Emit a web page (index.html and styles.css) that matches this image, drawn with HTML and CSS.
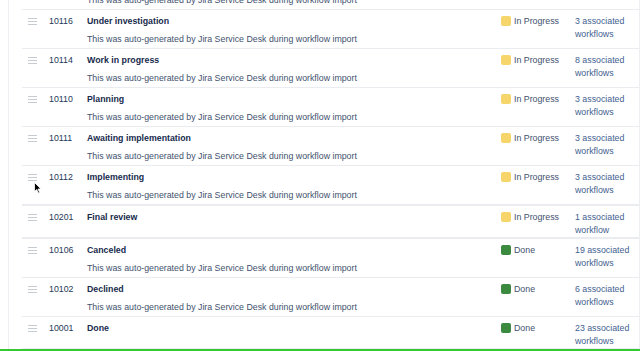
FILE: index.html
```html
<!DOCTYPE html>
<html>
<head>
<meta charset="utf-8">
<link rel="stylesheet" href="styles.css">
</head>
<body>
<div class="frame">
  <div class="list">
    <div class="row">
      <span class="handle"><svg width="9" height="7" viewBox="0 0 9 7"><path d="M0 .5h9M0 3.5h9M0 6.5h9" stroke="#c7cbd2" stroke-width="1"/></svg></span>
      <span class="id">10115</span>
      <span class="name">Waiting for approval</span>
      <span class="desc">This was auto-generated by Jira Service Desk during workflow import</span>
      <span class="status"><i class="sq prog"></i>In Progress</span>
      <a class="link">2 associated workflows</a>
    </div>
    <div class="row">
      <span class="handle"><svg width="9" height="7" viewBox="0 0 9 7"><path d="M0 .5h9M0 3.5h9M0 6.5h9" stroke="#c7cbd2" stroke-width="1"/></svg></span>
      <span class="id">10116</span>
      <span class="name">Under investigation</span>
      <span class="desc">This was auto-generated by Jira Service Desk during workflow import</span>
      <span class="status"><i class="sq prog"></i>In Progress</span>
      <a class="link">3 associated workflows</a>
    </div>
    <div class="row">
      <span class="handle"><svg width="9" height="7" viewBox="0 0 9 7"><path d="M0 .5h9M0 3.5h9M0 6.5h9" stroke="#c7cbd2" stroke-width="1"/></svg></span>
      <span class="id">10114</span>
      <span class="name">Work in progress</span>
      <span class="desc">This was auto-generated by Jira Service Desk during workflow import</span>
      <span class="status"><i class="sq prog"></i>In Progress</span>
      <a class="link">8 associated workflows</a>
    </div>
    <div class="row">
      <span class="handle"><svg width="9" height="7" viewBox="0 0 9 7"><path d="M0 .5h9M0 3.5h9M0 6.5h9" stroke="#c7cbd2" stroke-width="1"/></svg></span>
      <span class="id">10110</span>
      <span class="name">Planning</span>
      <span class="desc">This was auto-generated by Jira Service Desk during workflow import</span>
      <span class="status"><i class="sq prog"></i>In Progress</span>
      <a class="link">3 associated workflows</a>
    </div>
    <div class="row">
      <span class="handle"><svg width="9" height="7" viewBox="0 0 9 7"><path d="M0 .5h9M0 3.5h9M0 6.5h9" stroke="#c7cbd2" stroke-width="1"/></svg></span>
      <span class="id">10111</span>
      <span class="name">Awaiting implementation</span>
      <span class="desc">This was auto-generated by Jira Service Desk during workflow import</span>
      <span class="status"><i class="sq prog"></i>In Progress</span>
      <a class="link">3 associated workflows</a>
    </div>
    <div class="row thick">
      <span class="handle"><svg width="9" height="7" viewBox="0 0 9 7"><path d="M0 .5h9M0 3.5h9M0 6.5h9" stroke="#c7cbd2" stroke-width="1"/></svg></span>
      <span class="id">10112</span>
      <span class="name">Implementing</span>
      <span class="desc">This was auto-generated by Jira Service Desk during workflow import</span>
      <span class="status"><i class="sq prog"></i>In Progress</span>
      <a class="link">3 associated workflows</a>
    </div>
    <div class="row thick">
      <span class="handle"><svg width="9" height="7" viewBox="0 0 9 7"><path d="M0 .5h9M0 3.5h9M0 6.5h9" stroke="#c7cbd2" stroke-width="1"/></svg></span>
      <span class="id">10201</span>
      <span class="name">Final review</span>
      <span class="status"><i class="sq prog"></i>In Progress</span>
      <a class="link">1 associated workflow</a>
    </div>
    <div class="row">
      <span class="handle"><svg width="9" height="7" viewBox="0 0 9 7"><path d="M0 .5h9M0 3.5h9M0 6.5h9" stroke="#c7cbd2" stroke-width="1"/></svg></span>
      <span class="id">10106</span>
      <span class="name">Canceled</span>
      <span class="desc">This was auto-generated by Jira Service Desk during workflow import</span>
      <span class="status"><i class="sq done"></i>Done</span>
      <a class="link">19 associated workflows</a>
    </div>
    <div class="row">
      <span class="handle"><svg width="9" height="7" viewBox="0 0 9 7"><path d="M0 .5h9M0 3.5h9M0 6.5h9" stroke="#c7cbd2" stroke-width="1"/></svg></span>
      <span class="id">10102</span>
      <span class="name">Declined</span>
      <span class="desc">This was auto-generated by Jira Service Desk during workflow import</span>
      <span class="status"><i class="sq done"></i>Done</span>
      <a class="link">6 associated workflows</a>
    </div>
    <div class="row">
      <span class="handle"><svg width="9" height="7" viewBox="0 0 9 7"><path d="M0 .5h9M0 3.5h9M0 6.5h9" stroke="#c7cbd2" stroke-width="1"/></svg></span>
      <span class="id">10001</span>
      <span class="name">Done</span>
      <span class="desc"></span>
      <span class="status"><i class="sq done"></i>Done</span>
      <a class="link">23 associated workflows</a>
    </div>
  </div>
  <svg class="cursor" width="8" height="12" viewBox="0 0 8 12"><path d="M0.5 0.5v9l2.2-2 1.6 3.5 1.3-.6-1.6-3.4h3z" fill="#000" stroke="#fff" stroke-width="0.8"/></svg>
</div>
<div class="bar"></div>
</body>
</html>
```

FILE: styles.css
```css
html, body {
  margin: 0;
  padding: 0;
  background: #fff;
  overflow: hidden;
}
body {
  font-family: "Liberation Sans", Arial, sans-serif;
  font-size: 8.8px;
  color: #172b4d;
}
.frame {
  position: relative;
  height: 349px;
  overflow: hidden;
  margin-left: 8px;
  border-left: 1px solid #eceef1;
  border-right: 1px solid #eceef1;
}
.list {
  margin-top: -29px;
  padding-left: 13px;
}
.row {
  display: grid;
  grid-template-columns: 27px 38px 1fr 74px 64px;
  grid-template-rows: 18px auto;
  border-bottom: 1px solid #ebecf0;
  padding: 2px 0 0;
}
.row.thick {
  border-bottom: 2px solid #ebecf0;
}
.handle {
  grid-column: 1;
  grid-row: 1;
  display: flex;
  align-items: center;
  padding-left: 6px;
}
.handle svg { display: block; }
.id {
  grid-column: 2;
  grid-row: 1;
  line-height: 18px;
  color: #253858;
}
.name {
  grid-column: 3;
  grid-row: 1;
  line-height: 18px;
  font-weight: bold;
  color: #172b4d;
}
.desc {
  grid-column: 3;
  grid-row: 2;
  line-height: 18px;
  color: #42526e;
}
.status {
  grid-column: 4;
  grid-row: 1;
  display: flex;
  align-items: center;
  line-height: 18px;
  color: #42526e;
}
.sq {
  display: inline-block;
  width: 10px;
  height: 10px;
  border-radius: 2px;
  margin-right: 3px;
}
.sq.prog { background: #f6d56b; }
.sq.done { background: #3b8a3f; }
.link {
  grid-column: 5;
  grid-row: 1 / span 2;
  padding-top: 3px;
  line-height: 13px;
  color: #3f6190;
}
.cursor {
  position: absolute;
  left: 25px;
  top: 182px;
}
.bar {
  height: 2px;
  background: #34c934;
}
```
